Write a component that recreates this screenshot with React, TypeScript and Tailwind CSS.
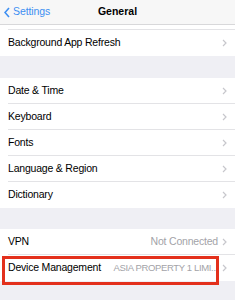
import React from "react";

const Chevron = () => (
  <svg width="5" height="8" viewBox="0 0 5 8" className="shrink-0">
    <path d="M1 1l3 3-3 3" fill="none" stroke="#c7c7cc" strokeWidth="1.2" />
  </svg>
);

function Row({
  label,
  value,
  tight,
  last,
}: {
  label: string;
  value?: string;
  tight?: boolean;
  last?: boolean;
}) {
  return (
    <div className="flex h-[26px] items-stretch bg-white pl-[8px]">
      <div
        className={`flex flex-1 items-center gap-[4px] pr-[8px] min-w-0 ${
          last ? "" : "border-b border-[#e3e3e6]"
        }`}
      >
        <span className="whitespace-nowrap text-[10.5px] tracking-[-0.2px] text-black">{label}</span>
        <span
          className={`flex-1 min-w-0 whitespace-nowrap text-right text-[#a3a3a8] ${
            tight ? "text-[9.5px] tracking-[-0.35px]" : "text-[10.5px] tracking-[-0.2px]"
          }`}
        >
          {value}
        </span>
        <Chevron />
      </div>
    </div>
  );
}

export default function App() {
  return (
    <div
      className="relative h-[300px] w-[235px] overflow-hidden bg-[#efeff4]"
      style={{ fontFamily: '"Liberation Sans", Arial, sans-serif' }}
    >
      {/* Nav bar */}
      <div className="relative flex h-[25px] items-center border-b border-[#d8d8da] bg-[#f7f7f7]">
        <div className="flex items-center gap-[3px] pl-[4px] text-[#3d8ff2]">
          <svg width="6" height="11" viewBox="0 0 6 11">
            <path d="M5 1L1 5.5 5 10" fill="none" stroke="#3d8ff2" strokeWidth="1.6" />
          </svg>
          <span className="text-[10.5px] tracking-[-0.1px]">Settings</span>
        </div>
        <span className="absolute left-1/2 -translate-x-1/2 text-[10.5px] font-semibold text-black">
          General
        </span>
      </div>

      {/* partially scrolled row */}
      <div className="h-[5px] bg-white pl-[8px]">
        <div className="h-full border-b border-[#e3e3e6]" />
      </div>
      <Row label="Background App Refresh" last />

      <div className="h-[22px]" />
      <Row label="Date & Time" />
      <Row label="Keyboard" />
      <Row label="Fonts" />
      <Row label="Language & Region" />
      <Row label="Dictionary" last />

      <div className="h-[21px]" />
      <Row label="VPN" value="Not Connected" />
      <Row label="Device Management" value="ASIA PROPERTY 1 LIMI..." tight last />

      {/* annotation box */}
      <div className="absolute left-[2px] top-[256px] h-[29px] w-[217px] border-[3px] border-[#e3301c]" />
    </div>
  );
}
